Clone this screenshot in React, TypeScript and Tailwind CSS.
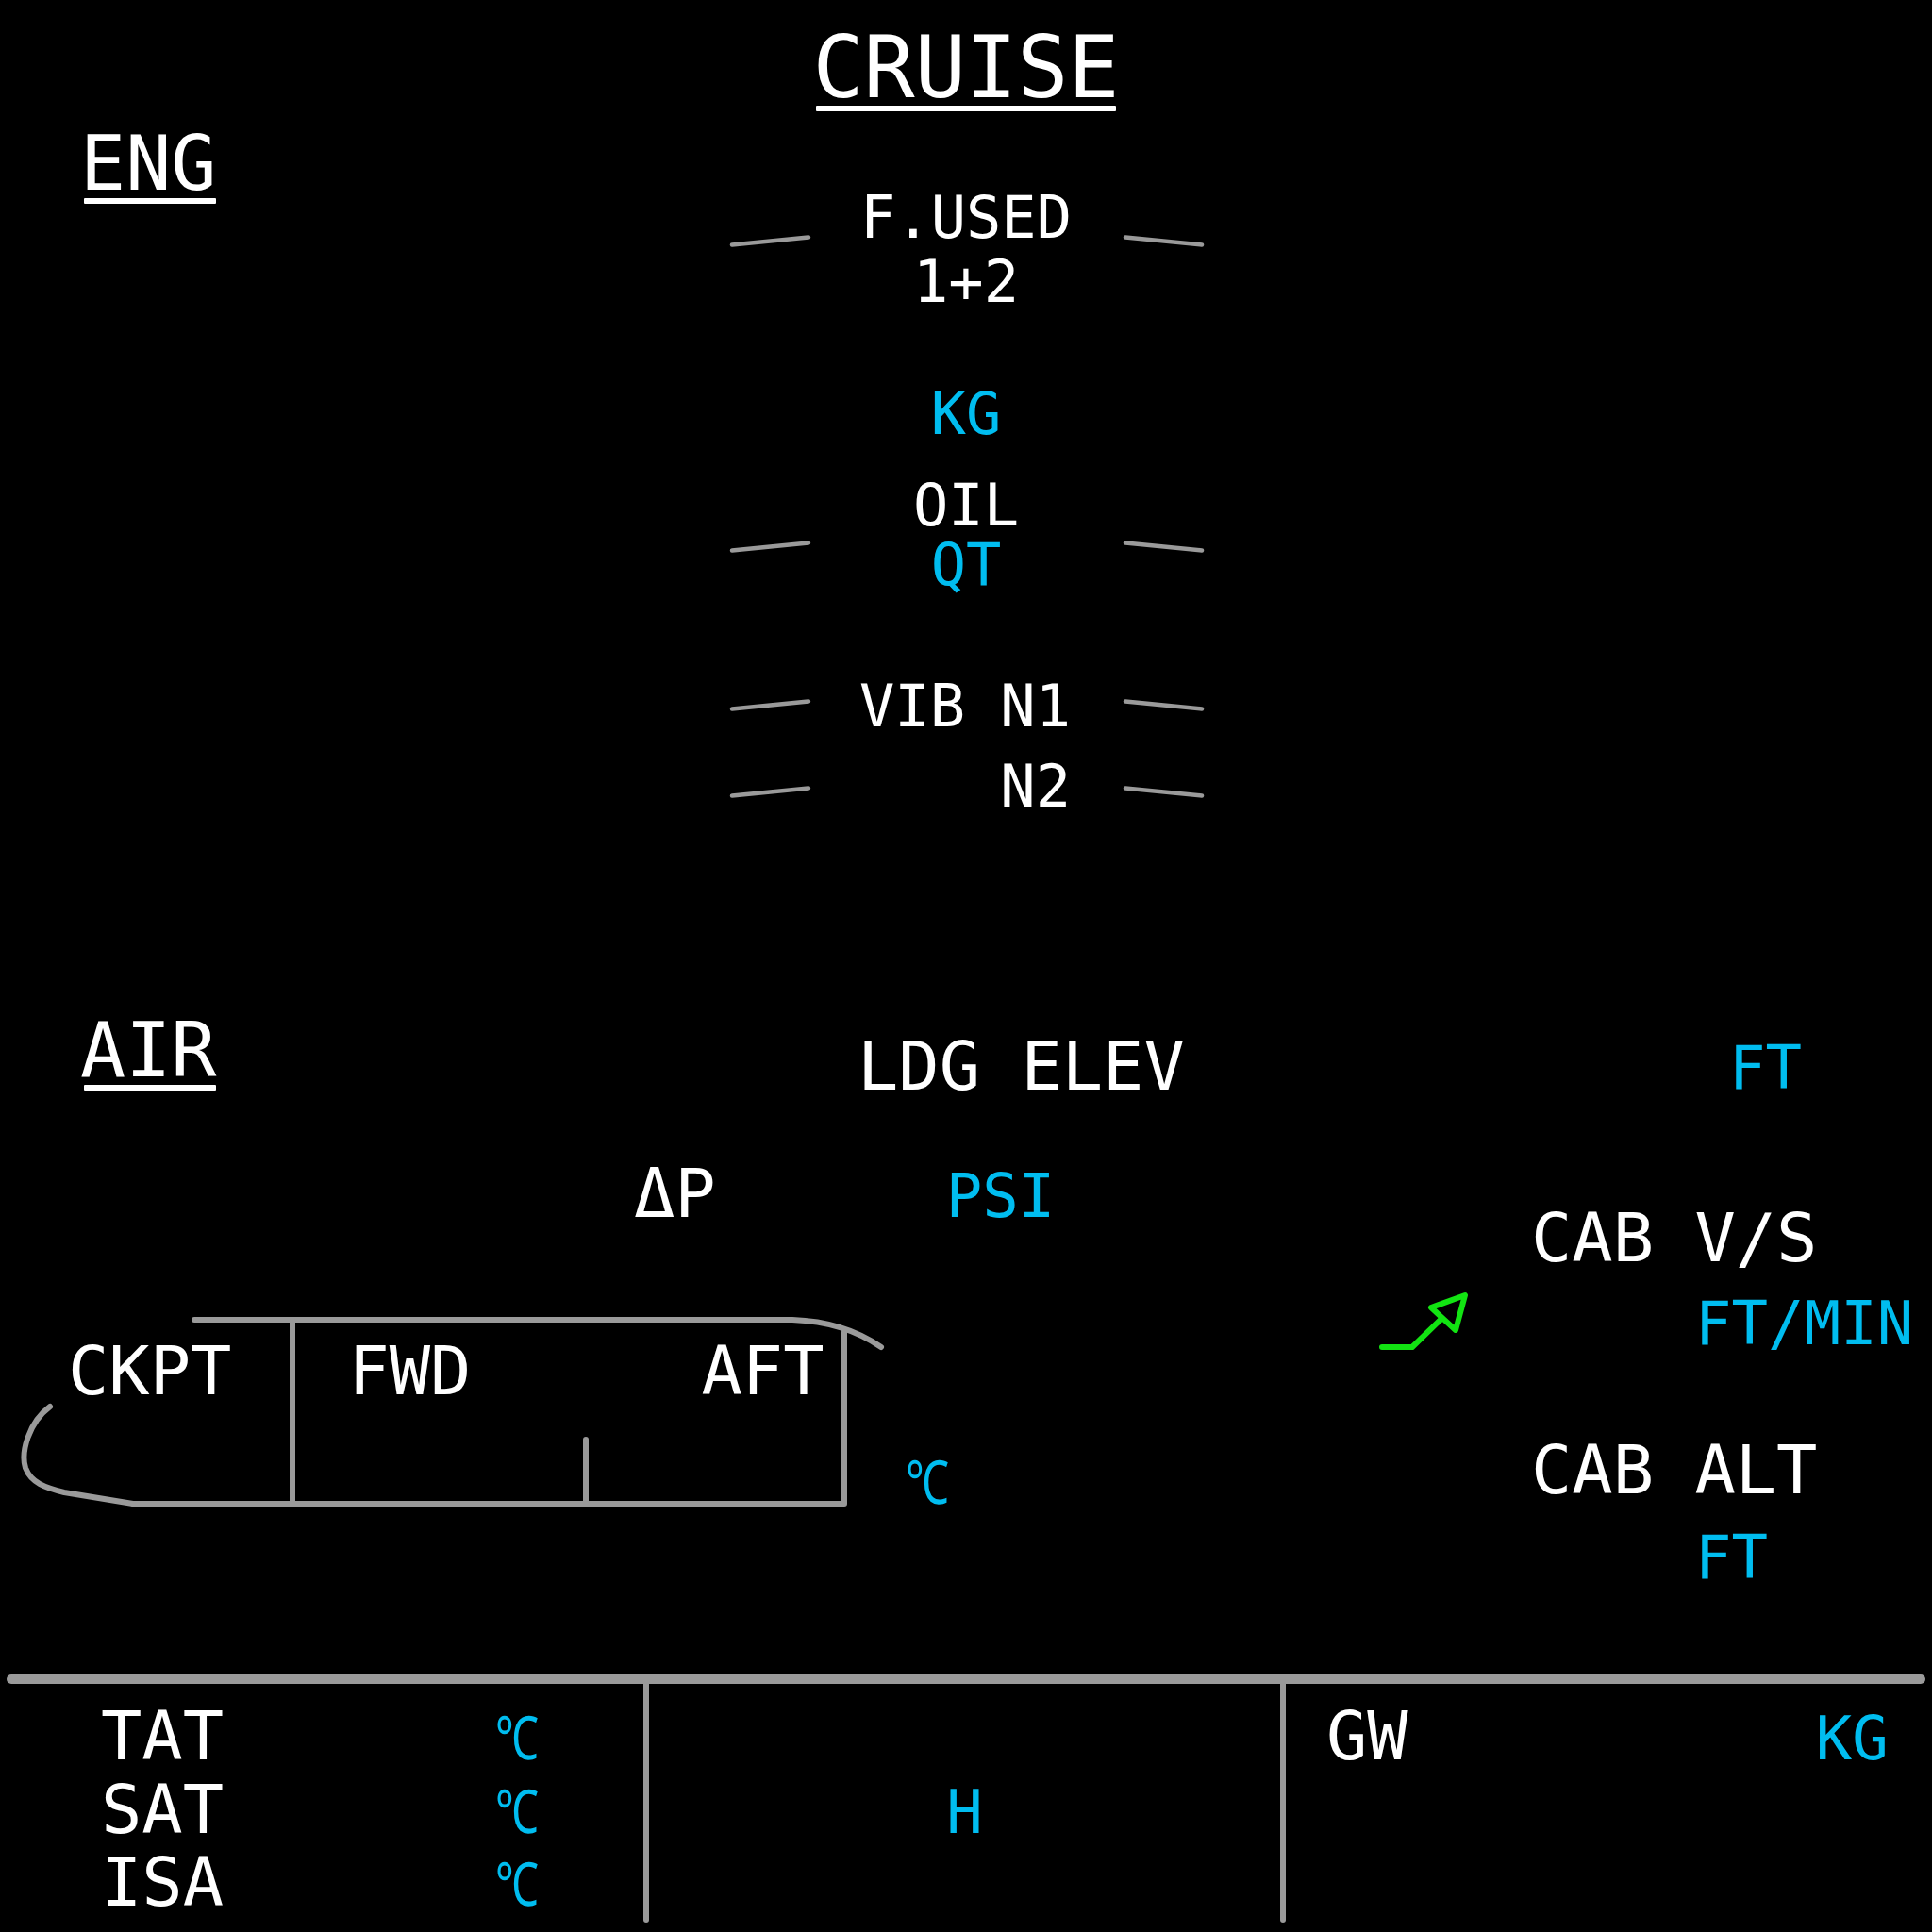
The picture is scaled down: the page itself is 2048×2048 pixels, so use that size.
import React from "react";

// ECAM cruise page
const BLUE = "text-[#00bdf0]";

function Dash({ side, className = "" }: { side: "l" | "r"; className?: string }) {
    const pts = side === "l" ? "2,9.5 83,1.5" : "1,1.5 82,9.5";
    return (
        <svg width="84" height="12" className={className} style={{ overflow: "visible" }}>
            <polyline points={pts} stroke="#9a9a9a" strokeWidth="4.5" strokeLinecap="round" fill="none" />
        </svg>
    );
}

function Deg({ className = "" }: { className?: string }) {
    return (
        <span className={`inline-block origin-left scale-x-[0.72] text-[64px] leading-none ${BLUE} ${className}`}>
            ℃
        </span>
    );
}

function Title({ text, className = "" }: { text: string; className?: string }) {
    return (
        <div className={`inline-flex flex-col ${className}`}>
            <span className="text-[80px] leading-none">{text}</span>
            <span className="-mt-[4px] ml-[4px] mr-[1px] h-[6px] rounded-[1px] bg-white" />
        </div>
    );
}

function CabinOutline() {
    return (
        <svg width="960" height="215" viewBox="0 1390 960 215" className="absolute inset-0">
            <g stroke="#9a9a9a" strokeWidth="6" fill="none" strokeLinecap="round" strokeLinejoin="round">
                <path d="M206 1399 L840 1399 Q895 1401 934 1428" />
                <path d="M310 1399 V1594" />
                <path d="M895 1412 V1594 H141" />
                <path d="M621 1526 V1594" />
                <path d="M53 1491 C30 1508 22 1540 27 1556 C33 1572 48 1577 68 1582 L141 1594" />
            </g>
        </svg>
    );
}

function VsArrow() {
    return (
        <svg width="110" height="75" viewBox="1455 1362 110 75" className="ml-[55px] shrink-0">
            <g stroke="#12e412" strokeWidth="6" fill="none" strokeLinecap="round" strokeLinejoin="round">
                <polyline points="1465,1428 1497,1428 1528,1398" />
                <polygon points="1517,1386 1553,1373 1543,1410" />
            </g>
        </svg>
    );
}

export default function App() {
    return (
        <div className="w-[2048px] h-[2048px] bg-black text-white font-['DejaVu_Sans_Mono',monospace] overflow-hidden">
            {/* ENG */}
            <section className="h-[1060px] flex flex-col">
                <div className="flex flex-col items-center pt-[27px]">
                    <div className="flex flex-col">
                        <span className="text-[90px] leading-none">CRUISE</span>
                        <span className="-mt-[5px] mx-[4px] h-[6px] rounded-[1px] bg-white" />
                    </div>
                </div>
                <div className="grid grid-cols-[1fr_500px_1fr]">
                    <div className="pl-[85px] pt-[16px]">
                        <Title text="ENG" />
                    </div>
                    <div className="flex flex-col pt-[82px] text-[62px] leading-none">
                        <div className="grid grid-cols-[82px_1fr_82px] items-start">
                            <Dash side="l" className="mt-[50px]" />
                            <div className="flex flex-col items-center">
                                <span>F.USED</span>
                                <span className="mt-[6px]">1+2</span>
                            </div>
                            <Dash side="r" className="mt-[50px]" />
                        </div>
                        <div className={`mt-[78px] text-center ${BLUE}`}>KG</div>
                        <div className="mt-[35px] grid grid-cols-[82px_1fr_82px] items-start">
                            <Dash side="l" className="mt-[69px]" />
                            <div className="flex flex-col items-center">
                                <span>OIL</span>
                                <span className={`mt-[1px] ${BLUE}`}>QT</span>
                            </div>
                            <Dash side="r" className="mt-[69px]" />
                        </div>
                        <div className="mt-[88px] grid grid-cols-[82px_1fr_82px] items-start">
                            <Dash side="l" className="mt-[24px]" />
                            <div className="flex justify-end pr-[57px]">VIB N1</div>
                            <Dash side="r" className="mt-[24px]" />
                        </div>
                        <div className="mt-[23px] grid grid-cols-[82px_1fr_82px] items-start">
                            <Dash side="l" className="mt-[31px]" />
                            <div className="flex justify-end pr-[57px]">N2</div>
                            <Dash side="r" className="mt-[31px]" />
                        </div>
                    </div>
                    <div />
                </div>
            </section>

            {/* AIR */}
            <section className="h-[710px] flex">
                <div className="w-[1400px] flex flex-col">
                    <div className="grid grid-cols-[909px_1fr] items-start">
                        <div className="pl-[85px] pt-[14px]">
                            <Title text="AIR" />
                        </div>
                        <div className="pt-[34px] text-[72px] leading-none">LDG ELEV</div>
                    </div>
                    <div className="mt-[63px] flex items-baseline pl-[672px]">
                        <span className="text-[72px] leading-none">ΔP</span>
                        <span className={`ml-[244px] text-[64px] leading-none ${BLUE}`}>PSI</span>
                    </div>
                    <div className="mt-[89px] flex items-start">
                        <div className="relative w-[960px] h-[215px] shrink-0">
                            <CabinOutline />
                            <div className="relative flex pt-[27px] pl-[72px] text-[72px] leading-none">
                                <span>CKPT</span>
                                <span className="ml-[124px]">FWD</span>
                                <span className="ml-[244px]">AFT</span>
                            </div>
                        </div>
                        <Deg className="mt-[150px]" />
                    </div>
                </div>
                <div className="flex-1 flex flex-col">
                    <div className={`pt-[40px] pl-[433px] text-[64px] leading-none ${BLUE}`}>FT</div>
                    <div className="mt-[112px] pl-[223px] text-[72px] leading-none">CAB V/S</div>
                    <div className="mt-[14px] flex items-start">
                        <VsArrow />
                        <span className={`mt-[9px] ml-[232px] text-[64px] leading-none ${BLUE}`}>FT/MIN</span>
                    </div>
                    <div className="mt-[85px] pl-[223px] text-[72px] leading-none">CAB ALT</div>
                    <div className={`mt-[25px] pl-[397px] text-[64px] leading-none ${BLUE}`}>FT</div>
                </div>
            </section>

            {/* bottom strip */}
            <section className="flex flex-col">
                <div className="mt-[5px] mx-[7px] h-[10px] rounded-full bg-[#9a9a9a]" />
                <div className="flex h-[253px]">
                    <div className="w-[682px] flex flex-col gap-[5.5px] pt-[19px]">
                        {["TAT", "SAT", "ISA"].map((t) => (
                            <div key={t} className="flex items-baseline">
                                <span className="pl-[107px] w-[237px] text-[72px] leading-none">{t}</span>
                                <Deg className="ml-[288px]" />
                            </div>
                        ))}
                    </div>
                    <div className="w-[6px] rounded-b-full bg-[#9a9a9a]" />
                    <div className="w-[669px] flex justify-center pt-[104px]">
                        <span className={`text-[64px] leading-none ${BLUE}`}>H</span>
                    </div>
                    <div className="w-[6px] rounded-b-full bg-[#9a9a9a]" />
                    <div className="flex-1 flex items-baseline pt-[19px] pl-[43px]">
                        <span className="text-[72px] leading-none">GW</span>
                        <span className={`ml-[432px] text-[64px] leading-none ${BLUE}`}>KG</span>
                    </div>
                </div>
            </section>
        </div>
    );
}
